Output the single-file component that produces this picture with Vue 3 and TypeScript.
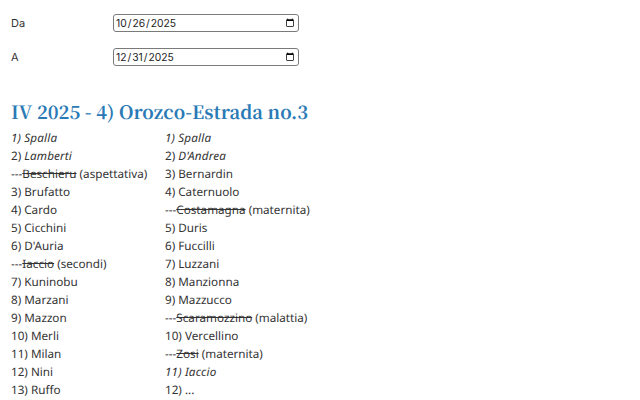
<script setup lang="ts">
interface Item { kind?: 'i' | 's' | 'n'; pre?: string; name: string; note?: string }
const left: Item[] = [
  { kind: 'i', name: '1) Spalla' },
  { pre: '2) ', kind: 'i', name: 'Lamberti' },
  { kind: 's', name: 'Beschieru', note: ' (aspettativa)' },
  { name: '3) Brufatto' }, { name: '4) Cardo' }, { name: '5) Cicchini' }, { name: "6) D'Auria" },
  { kind: 's', name: 'Iaccio', note: ' (secondi)' },
  { name: '7) Kuninobu' }, { name: '8) Marzani' }, { name: '9) Mazzon' }, { name: '10) Merli' },
  { name: '11) Milan' }, { name: '12) Nini' }, { name: '13) Ruffo' },
]
const right: Item[] = [
  { kind: 'i', name: '1) Spalla' },
  { pre: '2) ', kind: 'i', name: "D'Andrea" },
  { name: '3) Bernardin' }, { name: '4) Caternuolo' },
  { kind: 's', name: 'Costamagna', note: ' (maternita)' },
  { name: '5) Duris' }, { name: '6) Fuccilli' }, { name: '7) Luzzani' }, { name: '8) Manzionna' }, { name: '9) Mazzucco' },
  { kind: 's', name: 'Scaramozzino', note: ' (malattia)' },
  { name: '10) Vercellino' },
  { kind: 's', name: 'Zosi', note: ' (maternita)' },
  { kind: 'i', name: '11) Iaccio' },
  { name: '12) ...' },
]
const cols = [left, right]
</script>

<template>
  <main class="page">
    <div class="field"><label for="da">Da</label><input id="da" type="date" value="2025-10-26" /></div>
    <div class="field"><label for="a">A</label><input id="a" type="date" value="2025-12-31" /></div>
    <h2>IV 2025 - 4) Orozco-Estrada no.3</h2>
    <div class="cols">
      <ul v-for="(col, c) in cols" :key="c">
        <li v-for="(it, r) in col" :key="r">
          <template v-if="it.kind === 's'">---<s>{{ it.name }}</s>{{ it.note }}</template>
          <template v-else-if="it.kind === 'i'">{{ it.pre }}<em>{{ it.name }}</em></template>
          <template v-else>{{ it.name }}</template>
        </li>
      </ul>
    </div>
  </main>
</template>

<style>
html, body { margin: 0; background: #fff; overflow: hidden; }
</style>

<style scoped>
.page { height: 400px; overflow: hidden; padding: 14px 11px 0; box-sizing: border-box; font-family: "Noto Sans", sans-serif; font-size: 11.7px; line-height: 18px; color: #333; text-rendering: geometricPrecision; }
.field { display: flex; align-items: center; height: 18px; margin-bottom: 16px; }
.field label { width: 102px; font-family: Inter, sans-serif; font-size: 11px; }
.field input { width: 186px; height: 18px; box-sizing: border-box; padding: 0 1px; border: 1px solid #7a7a7a; border-radius: 3px; font-family: Inter, sans-serif; font-size: 10.3px; color: #222; }
h2 { margin: 32px 0 3px; font-family: "Noto Serif CJK SC", "Noto Serif", serif; font-size: 18.4px; line-height: 28px; color: #2a7ab5; }
.cols { display: flex; }
ul { list-style: none; margin: 0; padding: 0; }
ul:first-child { width: 154px; }
em { letter-spacing: 0.15px; }
</style>
